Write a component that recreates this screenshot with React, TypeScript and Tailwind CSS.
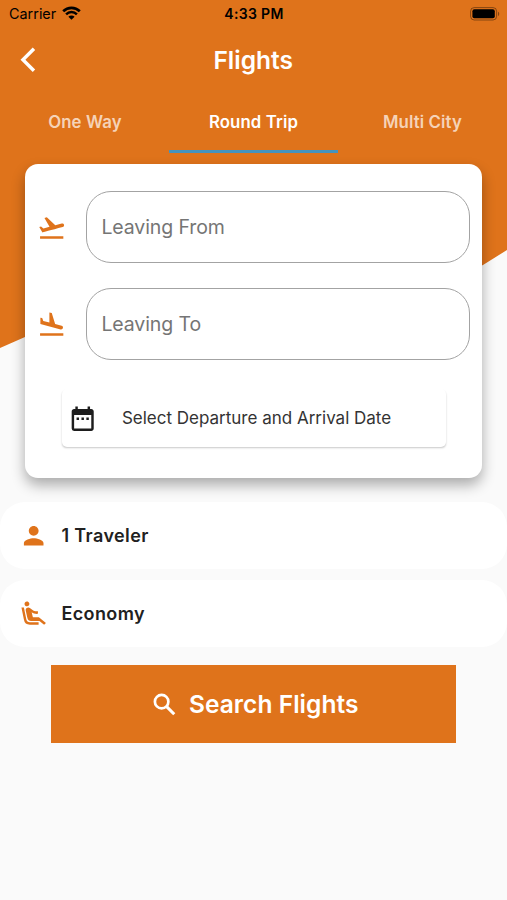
import {
  MdAirlineSeatReclineExtra,
  MdDateRange,
  MdFlightLand,
  MdFlightTakeoff,
  MdPerson,
} from "react-icons/md";
import type { IconType } from "react-icons";

const BackIcon = () => (
  <svg className="-mt-[2px] size-[29.4px]" viewBox="0 0 24 24" fill="none" stroke="currentColor" strokeWidth="2.8">
    <path d="M11.4 3 2.4 12l9 9" />
  </svg>
);

const SearchIcon = () => (
  <svg className="mt-[2px] size-[29.4px]" viewBox="0 0 24 24" fill="none" stroke="currentColor" strokeWidth="2.2">
    <circle cx="9.5" cy="9.5" r="5.5" />
    <path d="m13.6 13.6 6.2 6.2" strokeWidth="2.5" />
  </svg>
);

const StatusBar = () => {
  return (
    <div className="flex h-[28px] items-center pl-[9px] pr-[7px] text-black">
      <div className="flex flex-1 items-center gap-[6px]">
        <span className="text-[14.4px] leading-none">Carrier</span>
        <svg className="-mt-[2px]" width="19" height="14" viewBox="0 0 19 14" fill="none" stroke="currentColor">
          <path d="M1.2 5.2a11.8 11.8 0 0 1 16.6 0" strokeWidth="2.7" />
          <path d="M4.1 8.3a7.7 7.7 0 0 1 10.8 0" strokeWidth="2.5" />
          <path d="M9.5 13.8 6.4 10.7a4.4 4.4 0 0 1 6.2 0z" fill="currentColor" stroke="none" />
        </svg>
      </div>
      <span className="pr-px text-[14px] font-semibold leading-none tracking-[0.35px]">4:33 PM</span>
      <div className="flex flex-1 justify-end">
        <svg className="-mt-px" width="30" height="14" viewBox="0 0 30 14">
          <rect x="0.6" y="0.6" width="26" height="12.4" rx="3.6" fill="none" stroke="#000" strokeOpacity="0.4" />
          <rect x="2.4" y="2.3" width="22.4" height="9" rx="2" fill="#000" />
          <path d="M28 4.7c1.6.5 1.6 3.7 0 4.2z" fill="#000" fillOpacity="0.4" />
        </svg>
      </div>
    </div>
  );
};

const Tabs = () => {
  return (
    <nav className="grid h-[60px] grid-cols-3 text-center text-[16.8px] font-[560] leading-[59px] tracking-[0.12px] text-white/70">
      <span className="h-[60px] pl-px">One Way</span>
      <span className="h-[60px] border-b-[3px] border-[#4593bd] text-white">Round Trip</span>
      <span className="h-[60px]">Multi City</span>
    </nav>
  );
};

const Field = ({ icon: Icon, label }: { icon: IconType; label: string }) => {
  return (
    <div className="flex items-center">
      <Icon className="mt-[2px] size-[29.4px] text-[#df731b]" />
      <div className="ml-[20px] flex h-[72px] w-[384px] items-center rounded-[25px] border border-[#a3a3a3] pl-[14px] pt-[2px] text-[19.5px] tracking-[-0.1px] text-[#757575]">
        {label}
      </div>
    </div>
  );
};

const OptionRow = ({ icon: Icon, label }: { icon: IconType; label: string }) => {
  return (
    <div className="flex h-[67px] items-center rounded-[25px] bg-white pl-[19px] text-[18px] font-semibold tracking-[0.4px] text-[#212121]">
      <Icon className="size-[29.4px] text-[#df731b]" />
      <span className="ml-[13px]">{label}</span>
    </div>
  );
};

export default function App() {
  return (
    <div className="relative isolate h-[900px] w-[507px] overflow-hidden bg-[#fafafa] font-['Inter',sans-serif]">
      {/* Slanted header background */}
      <div className="absolute inset-x-0 top-0 -z-10 h-[348px] bg-[#df731b] [clip-path:polygon(0_0,507px_0,507px_250px,483px_265px,380px_312px,127px_300px,25px_337px,0_348px)]" />

      <StatusBar />
      <header className="flex h-[65px] items-center pl-[20px] text-white">
        <BackIcon />
        <h1 className="flex-1 pr-[50px] text-center text-[24.5px] font-[560] leading-none">Flights</h1>
      </header>
      <Tabs />

      {/* Search form */}
      <section className="mx-[25px] mt-[11px] h-[314px] rounded-[13px] bg-white pl-[12px] pt-[27px] shadow-[0_7px_14px_rgba(0,0,0,0.32)]">
        <div className="flex flex-col gap-[25px]">
          <Field icon={MdFlightTakeoff} label="Leaving From" />
          <Field icon={MdFlightLand} label="Leaving To" />
        </div>
        <button className="ml-[25px] mt-[29px] flex h-[58px] w-[384px] items-center rounded-[5px] bg-white pl-[6px] text-[17px] text-[#333] shadow-[0_1.5px_2px_-0.5px_rgba(0,0,0,0.22)]">
          <MdDateRange className="mt-px size-[29.4px] text-[#1d1d1d]" />
          <span className="ml-[24.5px] pt-[2px]">Select Departure and Arrival Date</span>
        </button>
      </section>

      <div className="mt-[24px] flex flex-col gap-[11px]">
        <OptionRow icon={MdPerson} label="1 Traveler" />
        <OptionRow icon={MdAirlineSeatReclineExtra} label="Economy" />
      </div>

      <button className="ml-[51px] mt-[18px] flex h-[78px] w-[405px] items-center bg-[#df731b] pl-[98.5px] text-[24.5px] font-[560] tracking-[0.06px] text-white">
        <SearchIcon />
        <span className="ml-[10px] pt-px">Search Flights</span>
      </button>
    </div>
  );
}
